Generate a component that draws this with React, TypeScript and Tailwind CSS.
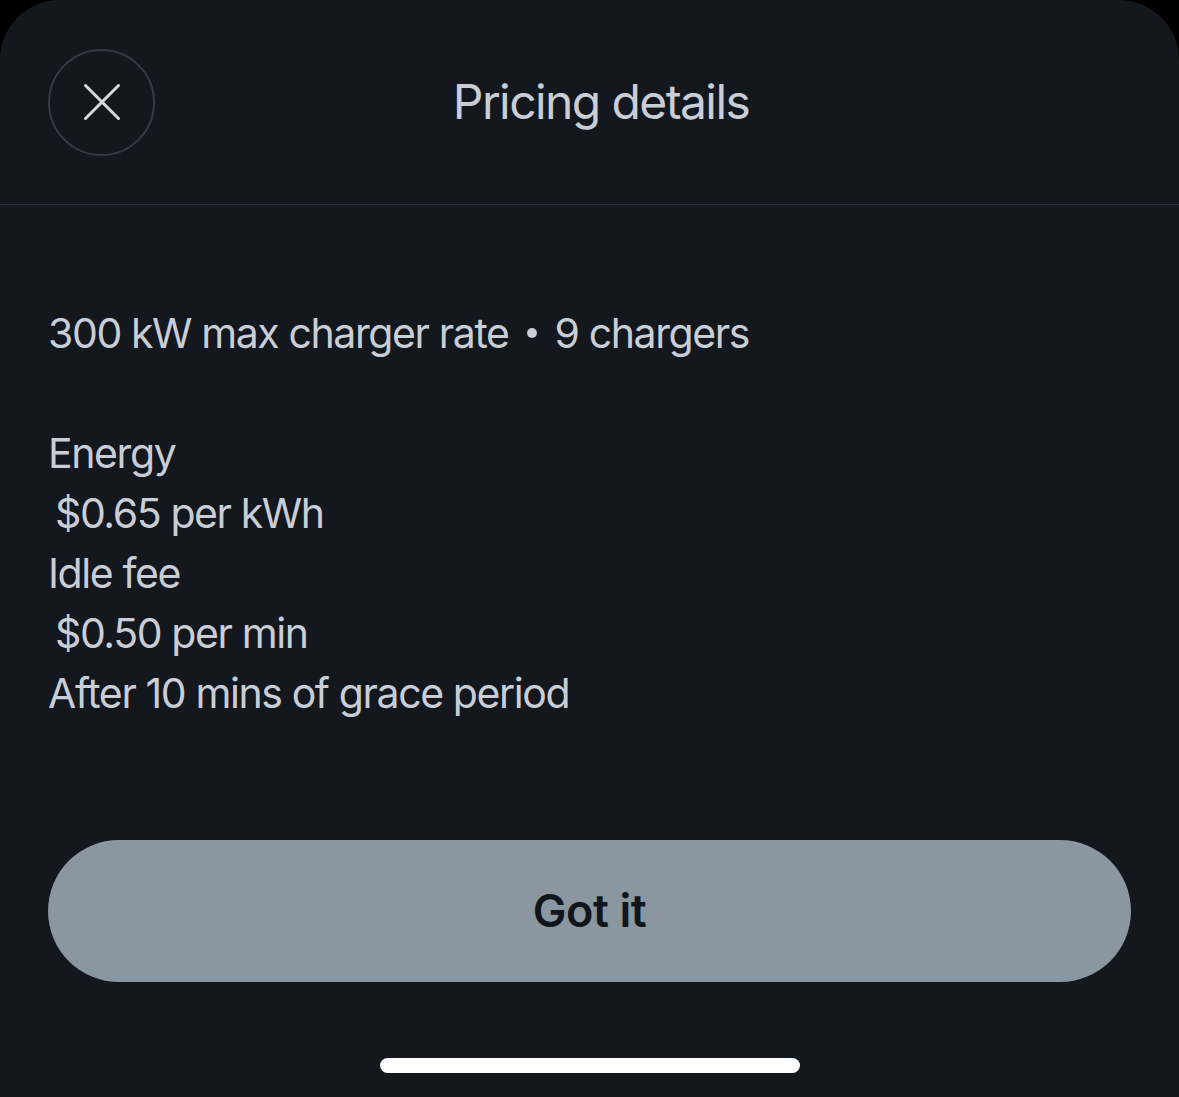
import { X } from "lucide-react";

const lines: { text: string; indent?: boolean }[] = [
  { text: "Energy" },
  { text: "$0.65 per kWh", indent: true },
  { text: "Idle fee" },
  { text: "$0.50 per min", indent: true },
  { text: "After 10 mins of grace period" },
];

export default function App() {
  return (
    <div className="w-[1179px] h-[1097px] bg-black overflow-hidden" style={{ fontFamily: "Inter, 'Noto Sans', sans-serif" }}>
      <div className="h-full bg-[#13171e] rounded-t-[60px] flex flex-col">
        {/* header */}
        <div className="h-[205px] px-12 flex items-center border-b border-[#2a2e36]">
          <button className="w-[107px] h-[107px] rounded-full border-2 border-[#363a42] flex items-center justify-center text-[#d4d8de]">
            <X size={66} strokeWidth={1.1} />
          </button>
          <h1 className="flex-1 text-center text-[48px] leading-none text-[#c9ced6] font-normal tracking-[-1.6px]">
            Pricing details
          </h1>
          <div className="w-[84px]" />
        </div>

        {/* body */}
        <div className="px-12 pt-[98px] text-[41px] leading-[60px] text-[#c9ced6] tracking-[-1.4px]">
          <p className="flex items-center">
            300 kW max charger rate
            <span className="mx-[18px] inline-block w-[10px] h-[10px] rounded-full bg-[#c9ced6]" />
            9 chargers
          </p>
          <div className="mt-[60px]">
            {lines.map((l) => (
              <p key={l.text} className={l.indent ? "pl-[7px]" : ""}>
                {l.text}
              </p>
            ))}
          </div>
        </div>

        {/* action */}
        <div className="px-12 mt-[117px]">
          <button className="w-full h-[142px] rounded-full bg-[#8a96a0] text-[#11151c] text-[45px] font-semibold tracking-[-0.4px]">
            Got it
          </button>
        </div>

        <div className="mt-[76px] flex justify-center">
          <div className="w-[420px] h-[15px] rounded-full bg-white" />
        </div>
      </div>
    </div>
  );
}
